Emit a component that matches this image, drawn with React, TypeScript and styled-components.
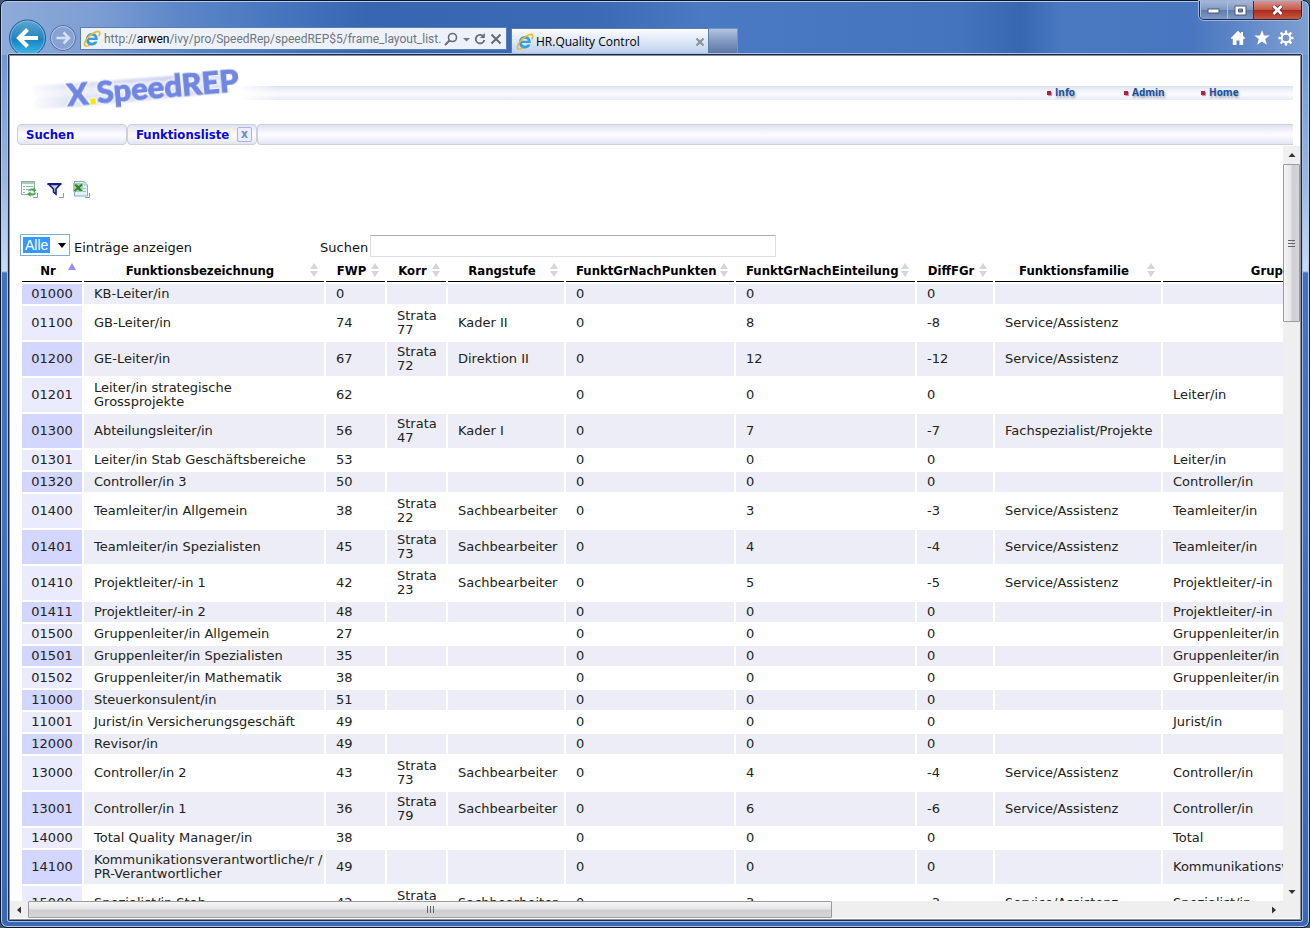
import React from "react";
import styled, { createGlobalStyle } from "styled-components";

const GlobalStyle = createGlobalStyle`
  * { box-sizing: border-box; }
  html, body { margin: 0; padding: 0; }
  body { background: #3c5a78; overflow: hidden; }
  button, input, select { font: inherit; margin: 0; padding: 0; }
`;

const bodyFont = `Verdana, "DejaVu Sans", sans-serif`;
const headFont = `Tahoma, "DejaVu Sans Condensed", "DejaVu Sans", sans-serif`;
const chromeFont = `"Segoe UI", "Open Sans", sans-serif`;

/* ---------- Browser window ---------- */

const Window = styled.div`
  display: flex;
  flex-direction: column;
  height: 100vh;
  min-height: 400px;
  padding: 0 7px 6px;
  border: 1px solid #0b1428;
  border-radius: 7px;
  box-shadow: inset 0 0 0 1px #b5c9e8;
  background:
    linear-gradient(90deg, #8eabd9 0, #7e9fd4 90px, #5c86c7 180px, #4474be 290px, #3666b2 370px, #3b6bb6 600px, #4a7ac3 700px, #4474be 960px, #3767b1 1020px, #4a79c2 1060px, #4876c0 1190px, #7f9fd2 100%) top / 100% 54px no-repeat,
    linear-gradient(180deg, #7196d2 54px, #9ab7e0 180px, #c8dbf2 270px, #4272bd 272px, #4373be 500px, #3a69b4 100%);
`;

const Chrome = styled.header`
  display: flex;
  flex: none;
  height: 53px;
  font-family: ${chromeFont};
  font-size: 12px;
`;

const AddressArea = styled.div`
  display: flex;
  align-items: flex-end;
  flex: 1;
  min-width: 0;
`;

const HistoryButtons = styled.div`
  display: flex;
  align-items: flex-end;
  flex: none;
  width: 72px;
  height: 100%;
`;

const HistoryButton = styled.button`
  display: block;
  border: 0;
  background: none;
  line-height: 0;
`;

const AddressBar = styled.form`
  display: flex;
  align-items: center;
  gap: 3px;
  flex: 0 1 427px;
  min-width: 0;
  height: 23px;
  margin-bottom: 4px;
  padding: 0 4px 0 2px;
  border: 1px solid #5b7fb5;
  background: #edf2fa;
`;

const Url = styled.div`
  flex: 1;
  min-width: 0;
  overflow: hidden;
  white-space: nowrap;
  font-family: "Segoe UI", Roboto, sans-serif;
  line-height: 20px;
  color: #70757d;
  b { font-weight: 400; color: #000; }
`;

const BarButton = styled.button`
  flex: none;
  border: 0;
  background: none;
  line-height: 0;
`;

const BrowserTab = styled.div`
  display: flex;
  align-items: center;
  gap: 2px;
  flex: 0 1 198px;
  height: 26px;
  margin-left: 4px;
  padding: 0 4px;
  border: 1px solid #5f7ba8;
  border-bottom: 0;
  background: linear-gradient(#fafcff, #dde7f7 50%, #bccfee);
  color: #000;
  span { flex: 1; white-space: nowrap; }
`;

const NewTab = styled.button`
  flex: none;
  width: 29px;
  height: 26px;
  border: 1px solid #7990b8;
  border-left: 0;
  background: linear-gradient(#b2c5e2, #8199c2 50%, #5f77a4);
`;

const WindowSide = styled.div`
  display: flex;
  flex-direction: column;
  align-items: flex-end;
  flex: none;
`;

const WindowButtons = styled.div`
  display: flex;
  width: 103px;
  height: 19px;
  border: 1px solid #1c2c4c;
  border-top: 0;
  border-radius: 0 0 5px 5px;
  overflow: hidden;
  box-shadow: 0 0 0 1px #9db4da;
`;

const WindowButton = styled.button<{ $close?: boolean }>`
  display: flex;
  align-items: center;
  justify-content: center;
  flex: ${(p) => (p.$close ? "0 0 48px" : "1")};
  border: 0;
  border-left: 1px solid ${(p) => (p.$close ? "#5b2630" : "#aebfdc")};
  background: ${(p) =>
    p.$close
      ? "linear-gradient(#d9958c, #c65a4c 48%, #a92a1c 50%, #c8583f)"
      : "linear-gradient(#a5b8d8, #8099c4 48%, #5f7baa 50%, #7f9aca)"};
  line-height: 0;
`;

const Tools = styled.div`
  display: flex;
  gap: 8px;
  margin: 10px 8px 0 0;
`;

const Viewport = styled.main`
  display: flex;
  flex-direction: column;
  flex: 1;
  min-height: 0;
  border: 1px solid #1c2b4a;
  border-radius: 1px;
  outline: 1px solid #a9c0e4;
  box-shadow: inset 0 0 0 1px #8a8e98;
  padding: 2px 1px 2px;
  background: #fff;
  font-family: ${bodyFont};
  font-size: 13px;
  line-height: 14px;
  color: #222;
`;

/* ---------- Application header ---------- */

const AppHeader = styled.div`
  display: flex;
  justify-content: space-between;
  flex: none;
  height: 67px;
  margin: 0 7px;
  background: linear-gradient(#dfe2f3, #f8f8fd 45%, #fbfbfe 60%, #e8eaf7) 0 29px / 100% 14px no-repeat;
`;

const LogoArt = styled.svg`
  flex: none;
  width: 260px;
  height: 67px;
`;

const LogoText = styled.text`
  font-family: Lato, sans-serif;
  font-weight: 900;
  font-size: 31px;
  fill: #7186e2;
  stroke: #7186e2;
  stroke-width: 1px;
  filter: drop-shadow(0 0 1px #fff) drop-shadow(0 0 1px #fff);
`;

const LogoDot = styled.tspan`
  font-family: "Liberation Sans", sans-serif;
  font-weight: 700;
  fill: #f6e800;
  stroke: #f6e800;
`;

const HeaderNav = styled.nav`
  display: grid;
  grid-template-columns: repeat(3, 77px);
  height: 12px;
  margin: 29px 15px 0 0;
`;

const HeaderLink = styled.a`
  display: flex;
  align-items: center;
  gap: 4px;
  font: 700 10px/12px "Open Sans", sans-serif;
  color: #1450a0;
  text-decoration: none;
  text-shadow: 1px 2px 2px #9aa3b4;
  &::before {
    content: "";
    width: 4px;
    height: 4px;
    margin-top: 2px;
    background: #c01c40;
    box-shadow: 1px 1px 1px #999;
  }
`;

const TabStrip = styled.nav`
  display: flex;
  flex: none;
  height: 21px;
  margin: 0 7px;
`;

const tabFill = `linear-gradient(#e0e2f0, #f8f8fd 40%, #fcfcff 55%, #e2e4f2)`;

const AppTab = styled.div<{ $width: number }>`
  display: flex;
  align-items: center;
  justify-content: space-between;
  width: ${(p) => p.$width}px;
  padding: 0 4px 0 8px;
  border: 1px solid #cdcfdf;
  border-radius: 4px;
  background: ${tabFill};
  a {
    font-family: ${headFont};
    font-weight: 700;
    color: #0808e0;
    text-decoration: none;
  }
`;

const TabFiller = styled.div`
  flex: 1;
  border: 1px solid #cdcfdf;
  border-right: 0;
  border-radius: 4px 0 0 4px;
  background: ${tabFill};
`;

const CloseTab = styled.button`
  width: 15px;
  height: 15px;
  border: 1px solid #aab4e0;
  border-radius: 2px;
  background: #eceffb;
  font: 700 12px/11px ${headFont};
  color: #6f86dc;
`;

/* ---------- Scrolling pane ---------- */

const Pane = styled.section`
  display: grid;
  grid-template-columns: minmax(0, 1fr) 17px;
  grid-template-rows: minmax(0, 1fr) 17px;
  flex: 1;
  min-height: 0;
  margin-top: 1px;
`;

const PaneContent = styled.div`
  overflow: hidden;
  padding: 34px 0 0 10px;
`;

const ScrollTrack = styled.div<{ $vertical?: boolean }>`
  display: flex;
  flex-direction: ${(p) => (p.$vertical ? "column" : "row")};
  background: #efeff0;
`;

const ScrollArrow = styled.button`
  display: flex;
  align-items: center;
  justify-content: center;
  flex: 0 0 18px;
  border: 0;
  background: none;
`;

const ScrollRun = styled.div<{ $vertical?: boolean }>`
  display: flex;
  flex-direction: ${(p) => (p.$vertical ? "column" : "row")};
  flex: 1;
  min-width: 0;
  min-height: 0;
`;

const Thumb = styled.div<{ $vertical?: boolean }>`
  display: flex;
  align-items: center;
  justify-content: center;
  flex: 0 0 ${(p) => (p.$vertical ? "22%" : "65%")};
  border: 1px solid #999ba0;
  border-radius: 1px;
  background: linear-gradient(${(p) => (p.$vertical ? "90deg" : "180deg")}, #f6f6f6, #e6e6e8 45%, #cfcfd3 55%, #d6d6da);
`;

const Corner = styled.div`
  background: #efeff0;
`;

const Actions = styled.div`
  display: flex;
  gap: 8px;
`;

const ActionButton = styled.button`
  width: 18px;
  height: 18px;
  border: 0;
  background: none;
  line-height: 0;
`;

const FilterRow = styled.div`
  display: flex;
  align-items: center;
  height: 24px;
  margin-top: 36px;
  color: #111;
`;

const LengthControl = styled.label`
  display: flex;
  align-items: center;
  gap: 4px;
  flex: 0 0 300px;
`;

const SelectBox = styled.span`
  position: relative;
  width: 50px;
  height: 22px;
  margin-bottom: 2px;
  select {
    appearance: none;
    width: 100%;
    height: 100%;
    padding: 0 0 0 4px;
    border: 1px solid #7ab0d6;
    border-radius: 0;
    background: linear-gradient(#3399ff, #3399ff) 2px 2px / 27px 16px no-repeat #fff;
    font: 14px/18px "Liberation Sans", sans-serif;
    color: #fff;
  }
  svg {
    position: absolute;
    right: 4px;
    top: 9px;
    pointer-events: none;
  }
`;

const LabelText = styled.span`
  padding-top: 3px;
`;

const SearchControl = styled.label`
  display: flex;
  align-items: center;
  gap: 2px;
  input {
    width: 406px;
    height: 22px;
    border: 1px solid #dcdfe4;
    border-top-color: #a8abb2;
    padding: 0 4px;
    background: #fff;
  }
`;

const DataTable = styled.table`
  table-layout: fixed;
  width: 1377px;
  border-collapse: separate;
  border-spacing: 2px;
  margin-top: 1px;
`;

const HeadCell = styled.th`
  position: relative;
  padding: 3px 18px 3px 10px;
  border-bottom: 1px solid #000;
  font-family: ${headFont};
  font-weight: 700;
  white-space: nowrap;
  color: #000;
  svg {
    position: absolute;
    right: 5px;
    top: 2px;
  }
`;

const Row = styled.tr<{ $odd: boolean }>`
  background: ${(p) => (p.$odd ? "#ecedf6" : "#fff")};
`;

const Cell = styled.td`
  padding: 3px 0 3px 10px;
`;

const NumberCell = styled.td<{ $odd: boolean }>`
  padding: 3px 0;
  text-align: center;
  background: ${(p) => (p.$odd ? "#d3d6ff" : "#eaebff")};
`;

/* ---------- Drawings ---------- */

const IeLogo = () => (
  <svg width="18" height="18" viewBox="0 0 18 18" aria-hidden="true">
    <path
      d="M14.800 10H6c.1 1.700 1.400 2.700 3.100 2.700 1.100 0 2-.3 2.500-1.100h2.900c-.8 2.500-2.900 4-5.500 4-3.600 0-6-2.600-6-6.200s2.500-6.300 6-6.300c3.700 0 6.100 2.800 5.800 6.900zM6.100 7.800h5.700C11.600 6.500 10.600 5.700 9 5.700S6.400 6.500 6.100 7.800z"
      fill="#36a0de"
      fillRule="evenodd"
    />
    <path d="M2.600 16c-2.400-.8-.9-5.500 3.400-9.600C10.500 2 15.700.3 16.600 2.300c.5 1 0 2.400-.9 3.900" fill="none" stroke="#edb72e" strokeWidth="1.700" />
    <path d="M2.600 16c1.200.4 2.800 0 4.300-.8" fill="none" stroke="#edb72e" strokeWidth="1.400" />
  </svg>
);

const Logo = () => (
  <LogoArt viewBox="0 0 260 67" role="img" aria-label="X.SpeedREP">
    <defs>
      <linearGradient id="streak" x1="0" x2="1" y1="0" y2="0">
        <stop offset="0" stopColor="#e6e8f6" stopOpacity="0" />
        <stop offset=".2" stopColor="#e2e5f5" />
        <stop offset=".7" stopColor="#cdd2f0" />
        <stop offset="1" stopColor="#dcdff4" />
      </linearGradient>
      <linearGradient id="clear" x1="0" x2="1" y1="0" y2="0">
        <stop offset="0" stopColor="#fff" />
        <stop offset=".85" stopColor="#fff" />
        <stop offset="1" stopColor="#fff" stopOpacity="0" />
      </linearGradient>
      <filter id="soft" x="-5%" y="-10%" width="110%" height="120%">
        <feGaussianBlur stdDeviation="1.200" />
      </filter>
    </defs>
    <rect width="260" height="67" fill="url(#clear)" />
    <g filter="url(#soft)">
      <path d="M10 29L60 26L205 15L212 35L60 50L13 52L20 40Z" fill="url(#streak)" />
      <path d="M18 35L130 24L205 22L205 27L130 36L18 41Z" fill="#fff" opacity=".4" />
    </g>
    <LogoText x="51" y="49" transform="rotate(-5 51 49)">
      X<LogoDot>.</LogoDot>SpeedREP
    </LogoText>
  </LogoArt>
);

const BackIcon = () => (
  <svg width="40" height="36" viewBox="0 0 40 36" aria-hidden="true">
    <defs>
      <linearGradient id="back" x1="0" x2="0" y1="0" y2="1">
        <stop offset="0" stopColor="#5aa6d2" />
        <stop offset=".48" stopColor="#2b87c2" />
        <stop offset=".55" stopColor="#1583c4" />
        <stop offset="1" stopColor="#43c1ea" />
      </linearGradient>
    </defs>
    <circle cx="19.500" cy="20" r="18" fill="url(#back)" stroke="#2c5a90" strokeWidth="1" />
    <circle cx="19.500" cy="20" r="16.800" fill="none" stroke="#8cc9e8" strokeWidth="1" opacity=".7" />
    <path d="M30 20H12M19.500 11.500L11 20l8.500 8.500" fill="none" stroke="#fff" strokeWidth="4" />
  </svg>
);

const ForwardIcon = () => (
  <svg width="30" height="36" viewBox="0 0 30 36" aria-hidden="true">
    <circle cx="15" cy="20" r="12.500" fill="#86a3d4" stroke="#4d6da8" />
    <circle cx="15" cy="20" r="11.500" fill="none" stroke="#b4c6e6" />
    <path d="M8.500 20h12M15.500 14.500L21 20l-5.500 5.500" fill="none" stroke="#d5e0f2" strokeWidth="2.500" />
  </svg>
);

const SortIcon = ({ active }: { active?: boolean }) =>
  active ? (
    <svg width="10" height="14" viewBox="0 0 10 14" aria-hidden="true">
      <path d="M5 0L9 7H1z" fill="#9090f4" />
    </svg>
  ) : (
    <svg width="10" height="14" viewBox="0 0 10 14" aria-hidden="true">
      <path d="M5 0L9 6H1zM5 14L1 8h8z" fill="#d6d6d6" />
    </svg>
  );

const Arrow = ({ d }: { d: string }) => (
  <svg width="8" height="8" viewBox="0 0 8 8" aria-hidden="true">
    <path d={d} fill="#333" />
  </svg>
);

const Grip = ({ vertical }: { vertical?: boolean }) => (
  <svg width="8" height="8" viewBox="0 0 8 8" aria-hidden="true">
    <path d={vertical ? "M0 1.500h7M0 4.500h7M0 7.500h7" : "M1.500 0v7M4.500 0v7M7.500 0v7"} stroke="#666" />
  </svg>
);

/* Small corner bracket shared by the three action icons */
const CornerMark = () => <path d="M17.500 13v4.500H13" fill="none" stroke="#8890d8" />;

const RefreshListIcon = () => (
  <svg width="18" height="18" viewBox="0 0 18 18" aria-hidden="true">
    <rect x="1.500" y="1.500" width="13" height="13" fill="#f2f8f2" stroke="#86b4a0" />
    <path d="M2 3h12" stroke="#a6d0ae" strokeWidth="2" />
    <path d="M3 6.500h2M6 6.500h7M3 9.500h2M6 9.500h4M3 12.500h2" stroke="#8fb8c4" />
    <path d="M8 11.500c1-3 4-3.500 5.500-2.500V7l3 3.500-3 2v-1.500c-2-1-4-.5-5.500.5zM16 12.500c-.5 3-4 3.500-5.500 2.800V17L7 14l3.500-2.500V13c2 .8 4 .5 5.500-.5z" fill="#52a352" />
    <CornerMark />
  </svg>
);

const FilterIcon = () => (
  <svg width="18" height="18" viewBox="0 0 18 18" aria-hidden="true">
    <path d="M3 4.500h11l-4 4.500V14L7.500 12V9z" fill="#bcd0ee" stroke="#1a1c78" strokeWidth="1.600" />
    <path d="M1.500 4h14" stroke="#1a1c78" strokeWidth="2" />
    <CornerMark />
  </svg>
);

const ExcelIcon = () => (
  <svg width="18" height="18" viewBox="0 0 18 18" aria-hidden="true">
    <path d="M2.500 1.500H12L15.500 5v11H2.500z" fill="#e2f0fa" stroke="#7aaed4" />
    <path d="M12 1.500V5h3.500M11 8.500h3M11 11.500h3" fill="none" stroke="#9cc2de" />
    <rect x="1" y="3" width="10" height="9" fill="#a8d0a4" />
    <path d="M2 4.500h3L10.500 11H7.500z" fill="#2f7f3a" />
    <path d="M10 4.500L2.500 11" stroke="#2f7f3a" strokeWidth="1.800" />
    <CornerMark />
  </svg>
);

const gearTeeth = [0, 45, 90, 135, 180, 225, 270, 315];

/* ---------- Data ---------- */

const columns = [
  { title: "Nr", width: 60 },
  { title: "Funktionsbezeichnung", width: 240 },
  { title: "FWP", width: 59 },
  { title: "Korr", width: 59 },
  { title: "Rangstufe", width: 116 },
  { title: "FunktGrNachPunkten", width: 168 },
  { title: "FunktGrNachEinteilung", width: 179 },
  { title: "DiffFGr", width: 76 },
  { title: "Funktionsfamilie", width: 166 },
  { title: "Gruppe", width: 232 },
];

const SA = "Service/Assistenz";
const SB = "Sachbearbeiter";

const rows: string[][] = [
  ["01000", "KB-Leiter/in", "0", "", "", "0", "0", "0", "", ""],
  ["01100", "GB-Leiter/in", "74", "Strata 77", "Kader II", "0", "8", "-8", SA, ""],
  ["01200", "GE-Leiter/in", "67", "Strata 72", "Direktion II", "0", "12", "-12", SA, ""],
  ["01201", "Leiter/in strategische Grossprojekte", "62", "", "", "0", "0", "0", "", "Leiter/in"],
  ["01300", "Abteilungsleiter/in", "56", "Strata 47", "Kader I", "0", "7", "-7", "Fachspezialist/Projekte", ""],
  ["01301", "Leiter/in Stab Geschäftsbereiche", "53", "", "", "0", "0", "0", "", "Leiter/in"],
  ["01320", "Controller/in 3", "50", "", "", "0", "0", "0", "", "Controller/in"],
  ["01400", "Teamleiter/in Allgemein", "38", "Strata 22", SB, "0", "3", "-3", SA, "Teamleiter/in"],
  ["01401", "Teamleiter/in Spezialisten", "45", "Strata 73", SB, "0", "4", "-4", SA, "Teamleiter/in"],
  ["01410", "Projektleiter/-in 1", "42", "Strata 23", SB, "0", "5", "-5", SA, "Projektleiter/-in"],
  ["01411", "Projektleiter/-in 2", "48", "", "", "0", "0", "0", "", "Projektleiter/-in"],
  ["01500", "Gruppenleiter/in Allgemein", "27", "", "", "0", "0", "0", "", "Gruppenleiter/in"],
  ["01501", "Gruppenleiter/in Spezialisten", "35", "", "", "0", "0", "0", "", "Gruppenleiter/in"],
  ["01502", "Gruppenleiter/in Mathematik", "38", "", "", "0", "0", "0", "", "Gruppenleiter/in"],
  ["11000", "Steuerkonsulent/in", "51", "", "", "0", "0", "0", "", ""],
  ["11001", "Jurist/in Versicherungsgeschäft", "49", "", "", "0", "0", "0", "", "Jurist/in"],
  ["12000", "Revisor/in", "49", "", "", "0", "0", "0", "", ""],
  ["13000", "Controller/in 2", "43", "Strata 73", SB, "0", "4", "-4", SA, "Controller/in"],
  ["13001", "Controller/in 1", "36", "Strata 79", SB, "0", "6", "-6", SA, "Controller/in"],
  ["14000", "Total Quality Manager/in", "38", "", "", "0", "0", "0", "", "Total"],
  ["14100", "Kommunikationsverantwortliche/r / PR-Verantwortlicher", "49", "", "", "0", "0", "0", "", "Kommunikationsverantwortliche/r"],
  ["15000", "Spezialist/in Stab", "42", "Strata 73", SB, "0", "3", "-3", SA, "Spezialist/in"],
];

/* ---------- Page ---------- */

const BrowserChrome = () => (
  <Chrome>
    <AddressArea>
      <HistoryButtons>
        <HistoryButton aria-label="Zurück"><BackIcon /></HistoryButton>
        <HistoryButton aria-label="Vorwärts"><ForwardIcon /></HistoryButton>
      </HistoryButtons>
      <AddressBar>
        <IeLogo />
        <Url>http://<b>arwen</b>/ivy/pro/SpeedRep/speedREP$5/frame_layout_list.</Url>
        <BarButton type="button" aria-label="Suchen">
          <svg width="26" height="14" viewBox="0 0 26 14" aria-hidden="true">
            <circle cx="8.500" cy="5.500" r="4" fill="none" stroke="#666b73" strokeWidth="1.600" />
            <path d="M5.500 8.500L1 13" stroke="#666b73" strokeWidth="2" />
            <path d="M19 6h7l-3.500 3.500z" fill="#777" />
          </svg>
        </BarButton>
        <BarButton type="button" aria-label="Aktualisieren">
          <svg width="14" height="14" viewBox="0 0 14 14" aria-hidden="true">
            <path d="M10.500 4.500A4.300 4.300 0 1 0 11.300 8" fill="none" stroke="#666b73" strokeWidth="1.800" />
            <path d="M11.800 1v5H7z" fill="#666b73" />
          </svg>
        </BarButton>
        <BarButton type="button" aria-label="Stopp">
          <svg width="12" height="14" viewBox="0 0 12 14" aria-hidden="true">
            <path d="M1.500 2.500l9 9M10.500 2.500l-9 9" stroke="#666b73" strokeWidth="2" />
          </svg>
        </BarButton>
      </AddressBar>
      <BrowserTab>
        <IeLogo />
        <span>HR.Quality Control</span>
        <BarButton aria-label="Tab schließen">
          <svg width="8" height="8" viewBox="0 0 8 8" aria-hidden="true">
            <path d="M.5.500l7 7M7.500.500l-7 7" stroke="#8a8f98" strokeWidth="2" />
          </svg>
        </BarButton>
      </BrowserTab>
      <NewTab aria-label="Neuer Tab" />
    </AddressArea>
    <WindowSide>
      <WindowButtons>
        <WindowButton aria-label="Minimieren">
          <svg width="13" height="8" viewBox="0 0 13 8" aria-hidden="true">
            <rect x="1" y="3" width="11" height="4" fill="#fff" stroke="#4a5870" />
          </svg>
        </WindowButton>
        <WindowButton aria-label="Maximieren">
          <svg width="13" height="11" viewBox="0 0 13 11" aria-hidden="true">
            <path d="M1 1h11v9H1zM4.500 4h4v3h-4z" fill="#fff" fillRule="evenodd" stroke="#4a5870" />
          </svg>
        </WindowButton>
        <WindowButton $close aria-label="Schließen">
          <svg width="13" height="12" viewBox="0 0 13 12" aria-hidden="true">
            <path d="M2.500 2l8 8M10.500 2l-8 8" stroke="#5a2630" strokeWidth="4.500" />
            <path d="M2.500 2l8 8M10.500 2l-8 8" stroke="#fff" strokeWidth="2.800" />
          </svg>
        </WindowButton>
      </WindowButtons>
      <Tools>
        <BarButton aria-label="Startseite">
          <svg width="16" height="16" viewBox="0 0 16 16" aria-hidden="true">
            <path d="M8 .8L.8 8l1.200 1.300.8-.7V15h3.700v-4.500h3V15h3.700V8.600l.8.700L15.200 8 13 5.800V2h-2v1.800z" fill="#fff" />
          </svg>
        </BarButton>
        <BarButton aria-label="Favoriten">
          <svg width="16" height="16" viewBox="0 0 16 16" aria-hidden="true">
            <path d="M8 .3l2 5.300h5.700l-4.500 3.500 1.700 5.700L8 11.500l-4.900 3.300 1.700-5.700L.3 5.600H6z" fill="#fff" />
          </svg>
        </BarButton>
        <BarButton aria-label="Extras">
          <svg width="16" height="16" viewBox="0 0 16 16" aria-hidden="true">
            {gearTeeth.map((angle) => (
              <rect key={angle} x="6.800" y=".5" width="2.400" height="3.500" fill="#fff" transform={`rotate(${angle} 8 8)`} />
            ))}
            <circle cx="8" cy="8" r="4.300" fill="none" stroke="#fff" strokeWidth="2" />
          </svg>
        </BarButton>
      </Tools>
    </WindowSide>
  </Chrome>
);

const FunctionTable = () => (
  <DataTable>
    <colgroup>
      {columns.map((c) => (
        <col key={c.title} width={c.width} />
      ))}
    </colgroup>
    <thead>
      <tr>
        {columns.map((c, i) => (
          <HeadCell key={c.title} scope="col">
            {c.title}
            <SortIcon active={i === 0} />
          </HeadCell>
        ))}
      </tr>
    </thead>
    <tbody>
      {rows.map(([nr, ...cells], r) => {
        const odd = r % 2 === 0;
        return (
          <Row key={nr} $odd={odd}>
            <NumberCell $odd={odd}>{nr}</NumberCell>
            {cells.map((value, i) => (
              <Cell key={i}>{value}</Cell>
            ))}
          </Row>
        );
      })}
    </tbody>
  </DataTable>
);

export default function App() {
  return (
    <>
      <GlobalStyle />
      <Window>
        <BrowserChrome />
        <Viewport>
          <AppHeader>
            <Logo />
            <HeaderNav>
              <HeaderLink href="#info">Info</HeaderLink>
              <HeaderLink href="#admin">Admin</HeaderLink>
              <HeaderLink href="#home">Home</HeaderLink>
            </HeaderNav>
          </AppHeader>
          <TabStrip>
            <AppTab $width={110}><a href="#suchen">Suchen</a></AppTab>
            <AppTab $width={130}>
              <a href="#funktionsliste">Funktionsliste</a>
              <CloseTab aria-label="Funktionsliste schließen">x</CloseTab>
            </AppTab>
            <TabFiller />
          </TabStrip>
          <Pane>
            <PaneContent>
              <Actions>
                <ActionButton aria-label="Liste aktualisieren"><RefreshListIcon /></ActionButton>
                <ActionButton aria-label="Filter"><FilterIcon /></ActionButton>
                <ActionButton aria-label="Excel-Export"><ExcelIcon /></ActionButton>
              </Actions>
              <FilterRow>
                <LengthControl>
                  <SelectBox>
                    <select defaultValue="Alle">
                      <option>Alle</option>
                    </select>
                    <svg width="8" height="5" viewBox="0 0 8 5" aria-hidden="true">
                      <path d="M0 0h8L4 5z" fill="#000" />
                    </svg>
                  </SelectBox>
                  <LabelText>Einträge anzeigen</LabelText>
                </LengthControl>
                <SearchControl>
                  <LabelText>Suchen</LabelText>
                  <input type="text" />
                </SearchControl>
              </FilterRow>
              <FunctionTable />
            </PaneContent>
            <ScrollTrack $vertical>
              <ScrollArrow aria-label="Nach oben"><Arrow d="M4 2L7.500 6h-7z" /></ScrollArrow>
              <ScrollRun $vertical>
                <Thumb $vertical><Grip vertical /></Thumb>
              </ScrollRun>
              <ScrollArrow aria-label="Nach unten"><Arrow d="M4 6L.5 2h7z" /></ScrollArrow>
            </ScrollTrack>
            <ScrollTrack>
              <ScrollArrow aria-label="Nach links"><Arrow d="M2 4L6 .5v7z" /></ScrollArrow>
              <ScrollRun>
                <Thumb><Grip /></Thumb>
              </ScrollRun>
              <ScrollArrow aria-label="Nach rechts"><Arrow d="M6 4L2 .5v7z" /></ScrollArrow>
            </ScrollTrack>
            <Corner />
          </Pane>
        </Viewport>
      </Window>
    </>
  );
}
